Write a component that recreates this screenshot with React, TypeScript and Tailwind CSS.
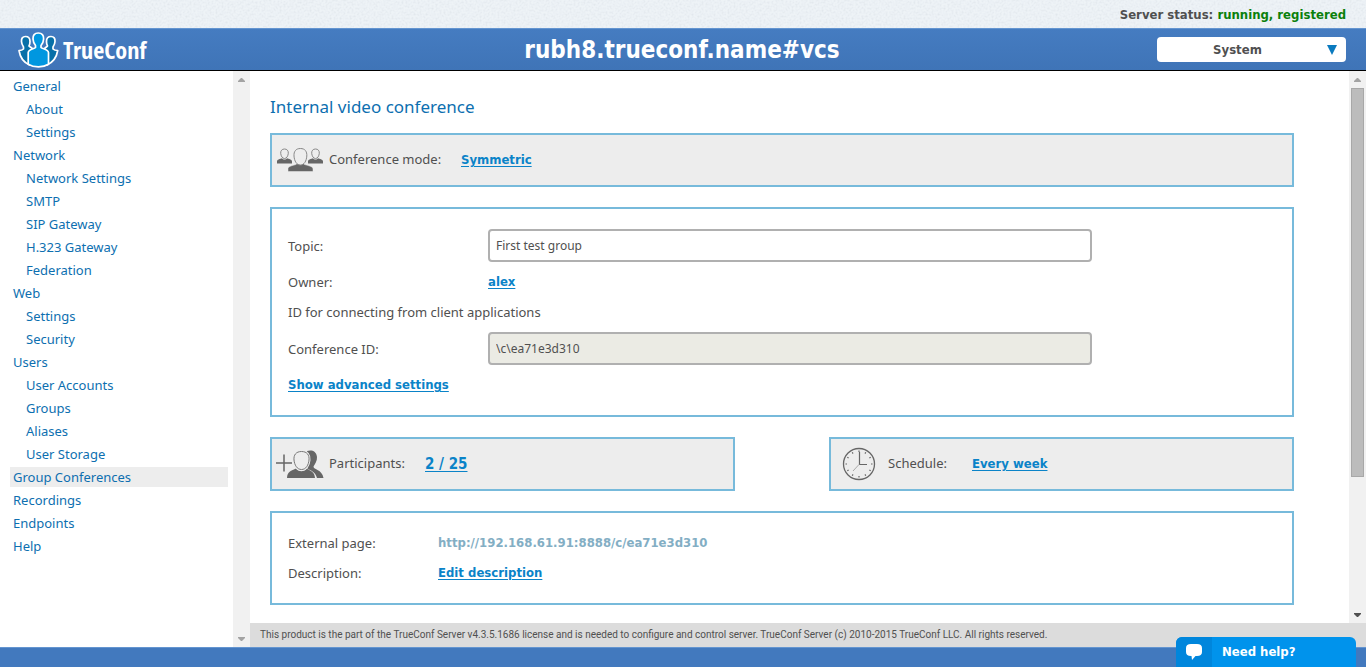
import React, { useState } from "react";

type NavItem = { label: string; sub?: boolean; active?: boolean };

const navItems: NavItem[] = [
  { label: "General" },
  { label: "About", sub: true },
  { label: "Settings", sub: true },
  { label: "Network" },
  { label: "Network Settings", sub: true },
  { label: "SMTP", sub: true },
  { label: "SIP Gateway", sub: true },
  { label: "H.323 Gateway", sub: true },
  { label: "Federation", sub: true },
  { label: "Web" },
  { label: "Settings", sub: true },
  { label: "Security", sub: true },
  { label: "Users" },
  { label: "User Accounts", sub: true },
  { label: "Groups", sub: true },
  { label: "Aliases", sub: true },
  { label: "User Storage", sub: true },
  { label: "Group Conferences", active: true },
  { label: "Recordings" },
  { label: "Endpoints" },
  { label: "Help" },
];

const bold =
  "font-['DejaVu_Sans_Condensed','DejaVu_Sans',sans-serif] font-bold";
const link = `${bold} text-[#0a83c8] underline underline-offset-2`;
const panel = "border-2 border-[#77badb]";

function Logo() {
  return (
    <a href="#" aria-label="TrueConf" className="flex items-center gap-1 text-white">
      <svg width="41" height="36" viewBox="0 0 41 36" aria-hidden="true">
        <g stroke="#fff" strokeWidth="1.7" strokeLinejoin="round">
          <path
            d="M7.500 4.500C4.500 4.500 3.300 6.500 3.500 9.500C3.600 12 4.500 13.500 5.500 15V17C4.500 18 2.500 18.500 1 18.500C2 25 6 30.500 11.500 33L15 17L11 14C11.500 13 12 11.500 12 9.500C12 6.500 10.500 4.500 7.500 4.500Z"
            fill="#0870a8"
          />
          <path
            d="M33 4.500C36 4.500 37.200 6.500 37 9.500C36.900 12 36 13.500 35 15V17C36 18 38 18.500 39.700 18.500C38.700 25 34.500 30.500 29 33L26 17L29.500 14C29 13 28.500 11.500 28.500 9.500C28.500 6.500 30 4.500 33 4.500Z"
            fill="#0870a8"
          />
          <path
            d="M20.300 1C16.500 1 14.800 3.300 15 7C15.100 10 16.300 12 17.500 13.500V15.500C16 17 10.500 17 10.200 20.500V32.300C16 35.800 25 35.800 30.500 32.300V20.500C30.200 17 24.500 17 23 15.500V13.500C24.300 12 25.500 10 25.600 7C25.800 3.300 24 1 20.300 1Z"
            fill="#0097e0"
          />
        </g>
      </svg>
      <span className="font-['Open_Sans_Condensed','Roboto_Condensed',sans-serif] text-2xl font-bold">
        TrueConf
      </span>
    </a>
  );
}

function SmallPerson({ x }: { x: number }) {
  return (
    <g transform={`translate(${x} 0)`}>
      <path
        d="M0 16.500V14.500C0 13 1 12.500 5 11.200C6 13 9 13 10 11.200C14 12.500 15 13 15 14.500V16.500Z"
        fill="#666"
      />
      <path
        d="M7.500 2C5 2 3.500 3.700 3.700 6.300C4 9 5.300 11.500 7.500 11.500C9.700 11.500 11 9 11.300 6.300C11.500 3.700 10 2 7.500 2Z"
        fill="#ededed"
        stroke="#888"
      />
    </g>
  );
}

function ConferenceIcon() {
  return (
    <svg width="47" height="26" viewBox="0 0 47 26" aria-hidden="true">
      <SmallPerson x={0} />
      <SmallPerson x={31} />
      <path
        d="M11 24.500V22C11 20 12.500 19.300 18 17.800C19.500 17.400 19.800 17 20 16H26.500C26.700 17 27 17.400 28.500 17.800C34 19.300 36 20 36 22V24.500Z"
        fill="#666"
        stroke="#ededed"
        strokeWidth="0.5"
      />
      <path
        d="M23.400 1.500C18.800 1.500 16.700 4.500 17 9C17.400 14 19.500 18 23.400 18C27.300 18 29.400 14 29.800 9C30.100 4.500 28 1.500 23.400 1.500Z"
        fill="#ededed"
        stroke="#888"
      />
    </svg>
  );
}

function ParticipantsIcon() {
  return (
    <svg width="48" height="30" viewBox="0 0 48 30" aria-hidden="true">
      <path d="M0 14H16M8 5.500V22.500" stroke="#666" strokeWidth="1.500" />
      <path
        d="M31 2C35 .5 40.500 1.500 41 8C41.300 12 39 15 37.500 17.500C37.500 21 46 20 47.500 29H41C39.500 24 37 22 31.500 20Z"
        fill="#666"
      />
      <path
        d="M11 29C11.500 22.500 14 22.500 20 19.500C23 23 28 23 30.500 19.500C36 22.500 38.500 23 39 29Z"
        fill="#666"
      />
      <path
        d="M25.500 2.500C20 2.500 17.500 6 18 11C18.500 16 21 20.500 25.500 20.500C30 20.500 32.500 16 33 11C33.500 6 31 2.500 25.500 2.500Z"
        fill="#ededed"
        stroke="#ededed"
        strokeWidth="3"
      />
      <path
        d="M25.500 2.500C20 2.500 17.500 6 18 11C18.500 16 21 20.500 25.500 20.500C30 20.500 32.500 16 33 11C33.500 6 31 2.500 25.500 2.500Z"
        fill="#ededed"
        stroke="#777"
      />
    </svg>
  );
}

function ClockIcon() {
  const ticks = Array.from({ length: 12 }, (_, i) => i * 30);
  return (
    <svg width="34" height="34" viewBox="0 0 34 34" aria-hidden="true">
      <circle cx="17" cy="17" r="15.500" fill="none" stroke="#666" strokeWidth="1.300" />
      {ticks.map((a) => (
        <path
          key={a}
          d="M17 3.500V5"
          stroke="#666"
          strokeWidth="1.200"
          transform={`rotate(${a} 17 17)`}
        />
      ))}
      <path d="M17.500 5V17.500H25" fill="none" stroke="#666" strokeWidth="1.200" />
      <path d="M17 17.500L11 24" stroke="#aaa" strokeWidth="1" />
    </svg>
  );
}

function Arrow({ down, dark }: { down?: boolean; dark?: boolean }) {
  return (
    <svg width="7" height="4" viewBox="0 0 7 4" aria-hidden="true">
      <path
        d={down ? "M0 0H7V1L4 4H3L0 1Z" : "M0 4H7V3L4 0H3L0 3Z"}
        fill={dark ? "#505050" : "#a3a3a3"}
      />
    </svg>
  );
}

function ScrollBar({ thumb }: { thumb?: boolean }) {
  return (
    <div
      aria-hidden="true"
      className="flex w-[17px] shrink-0 flex-col items-center bg-[#f1f1f1]"
    >
      <span className="flex h-[17px] items-center">
        <Arrow />
      </span>
      <div className="flex w-full flex-1 flex-col px-0.5">
        {thumb && <div className="h-3/4 border border-[#a8a8a8] bg-[#bcbcbc]" />}
      </div>
      <span className="flex h-[17px] items-center">
        <Arrow down dark={thumb} />
      </span>
    </div>
  );
}

export default function App() {
  const [topic, setTopic] = useState("First test group");
  return (
    <div className="flex min-h-screen flex-col bg-white font-['Noto_Sans',sans-serif] text-[13px] text-[#505050]">
      <div className="relative h-7 overflow-hidden bg-[#edf2f6]">
        <svg className="absolute inset-0 h-full w-full opacity-10" aria-hidden="true">
          <filter id="grain">
            <feTurbulence type="fractalNoise" baseFrequency="0.5" numOctaves="2" />
            <feColorMatrix values="1.5 0 0 0 0  1.5 0 0 0 0.05  1.5 0 0 0 0.1  0 0 0 0 1" />
          </filter>
          <rect width="100%" height="100%" filter="url(#grain)" />
        </svg>
        <p className={`${bold} relative pr-5 text-right leading-[30px]`}>
          Server status: <span className="text-[#0b800b]">running, registered</span>
        </p>
      </div>

      <header className="grid h-[43px] grid-cols-3 items-center border-t border-b border-t-[#6495d0] border-b-black bg-linear-to-b from-[#457cc1] to-[#3f74b7] pr-5 pl-[18px]">
        <Logo />
        <h1 className={`${bold} text-center text-2xl whitespace-nowrap text-white`}>
          rubh8.trueconf.name#vcs
        </h1>
        <div className="relative w-[189px] justify-self-end">
          <select
            aria-label="System menu"
            className={`${bold} block h-[25px] w-full appearance-none rounded bg-white pr-7 text-center text-[13px]`}
          >
            <option>System</option>
          </select>
          <svg
            className="pointer-events-none absolute top-2 right-[9px]"
            width="10"
            height="10"
            viewBox="0 0 10 10"
            aria-hidden="true"
          >
            <path d="M0 0H10L5 10Z" fill="#0a7abf" />
          </svg>
        </div>
      </header>

      <div className="flex flex-1">
        <nav className="w-[233px] shrink-0 pt-[5px] pr-[5px] pl-2.5">
          <ul className="flex flex-col gap-[3px]">
            {navItems.map((item, i) => (
              <li key={i} className={item.active ? "bg-[#ededed]" : ""}>
                <a
                  href="#"
                  className={`block leading-5 text-[#0d6fb0] ${item.sub ? "pl-4" : "pl-[3px]"}`}
                >
                  {item.label}
                </a>
              </li>
            ))}
          </ul>
        </nav>
        <ScrollBar />

        <div className="flex min-w-0 flex-1 flex-col">
          <div className="flex flex-1">
            <main className="flex min-w-0 flex-1 flex-col gap-5 pt-6 pr-[55px] pb-[18px] pl-5">
              <h2 className="-mb-1.5 text-[17px] leading-6 text-[#0d6fb0]">
                Internal video conference
              </h2>

              <section className={`${panel} flex h-[54px] items-center bg-[#ededed] pl-[5px]`}>
                <span className="w-[52px]">
                  <ConferenceIcon />
                </span>
                <span className="w-[132px]">Conference mode:</span>
                <a href="#" className={link}>
                  Symmetric
                </a>
              </section>

              <section className={`${panel} px-4 pt-5 pb-[15px] leading-[30px]`}>
                <div className="flex items-center">
                  <label htmlFor="topic" className="w-[200px]">
                    Topic:
                  </label>
                  <input
                    id="topic"
                    value={topic}
                    onChange={(e) => setTopic(e.target.value)}
                    className="h-[33px] w-full max-w-[604px] rounded border-2 border-[#b0b0b0] bg-white px-1.5 text-xs"
                  />
                </div>
                <div className="mt-[5px] flex">
                  <span className="w-[200px]">Owner:</span>
                  <a href="#" className={link}>
                    alex
                  </a>
                </div>
                <p>ID for connecting from client applications</p>
                <div className="mt-[5px] flex items-center">
                  <label htmlFor="conf-id" className="w-[200px]">
                    Conference ID:
                  </label>
                  <input
                    id="conf-id"
                    readOnly
                    value="\c\ea71e3d310"
                    className="h-[33px] w-full max-w-[604px] rounded border-2 border-[#b0b0b0] bg-[#ebebe4] px-1.5 text-xs"
                  />
                </div>
                <div className="mt-[5px] flex">
                  <a href="#" className={link}>
                    Show advanced settings
                  </a>
                </div>
              </section>

              <div className="flex justify-between gap-5">
                <section
                  className={`${panel} flex h-[54px] w-[465px] items-center bg-[#ededed] pl-1`}
                >
                  <span className="w-[53px]">
                    <ParticipantsIcon />
                  </span>
                  <span className="w-24">Participants:</span>
                  <a href="#" className={`${link} text-[15px]`}>
                    2 / 25
                  </a>
                </section>
                <section
                  className={`${panel} flex h-[54px] w-[465px] items-center bg-[#ededed] pl-[11px]`}
                >
                  <span className="w-[46px]">
                    <ClockIcon />
                  </span>
                  <span className="w-[84px]">Schedule:</span>
                  <a href="#" className={link}>
                    Every week
                  </a>
                </section>
              </div>

              <section className={`${panel} px-4 py-[15px] leading-[30px]`}>
                <div className="flex">
                  <span className="w-[150px]">External page:</span>
                  <span className={`${bold} text-[#83aec4]`}>
                    http://192.168.61.91:8888/c/ea71e3d310
                  </span>
                </div>
                <div className="flex">
                  <span className="w-[150px]">Description:</span>
                  <a href="#" className={link}>
                    Edit description
                  </a>
                </div>
              </section>
            </main>
            <ScrollBar thumb />
          </div>
          <footer className="h-6 bg-[#dcdcdc] pl-2.5 font-[Roboto,sans-serif] text-[10px] leading-6">
            This product is the part of the TrueConf Server v4.3.5.1686 license and is needed to
            configure and control server. TrueConf Server (c) 2010-2015 TrueConf LLC. All rights
            reserved.
          </footer>
        </div>
      </div>

      <div className="h-5 border-t border-[#6495d0] bg-[#4279be]" />

      <button
        type="button"
        className={`${bold} fixed right-2.5 bottom-0 flex h-[30px] w-[180px] items-center overflow-hidden rounded-t-md bg-[#0093ec] text-left text-[13px] text-white`}
      >
        <span className="flex h-full w-9 items-center justify-center bg-[#0086dc]">
          <svg width="16" height="16" viewBox="0 0 16 16" aria-hidden="true">
            <path
              d="M5 0H11Q16 0 16 4V8Q16 12 11 12H9.500L6 16L5.500 12H5Q0 12 0 8V4Q0 0 5 0Z"
              fill="#fff"
            />
          </svg>
        </span>
        <span className="pl-2.5">Need help?</span>
      </button>
    </div>
  );
}
